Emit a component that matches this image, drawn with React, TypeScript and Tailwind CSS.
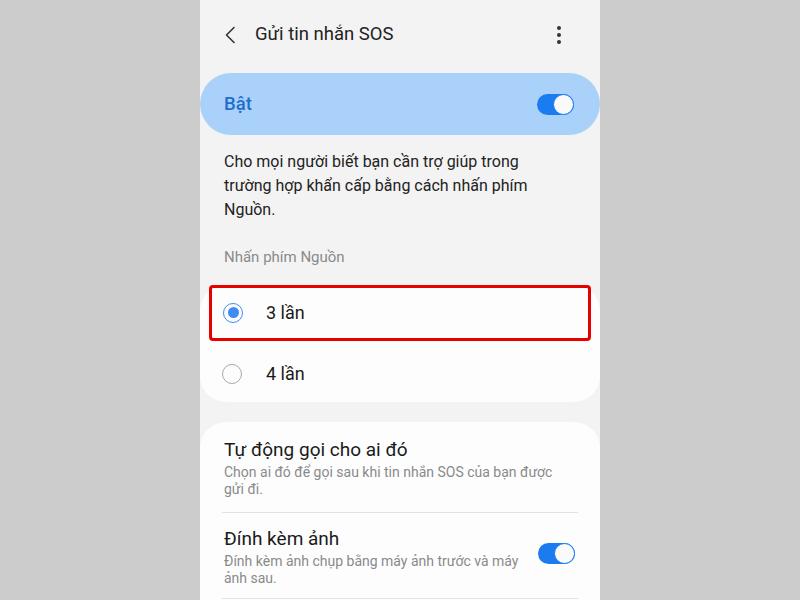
import React from "react";

function Toggle() {
  return (
    <div className="relative w-[37px] h-[21px] rounded-full bg-[#1b7cf0]">
      <div className="absolute right-0 top-0 w-[21px] h-[21px] rounded-full bg-[#fafafa] border-[1.5px] border-[#1b7cf0]" />
    </div>
  );
}

function Radio({ checked }: { checked: boolean }) {
  return checked ? (
    <div className="w-[20px] h-[20px] rounded-full border-[1.5px] border-[#3f8cf5] flex items-center justify-center">
      <div className="w-[11px] h-[11px] rounded-full bg-[#3f8cf5]" />
    </div>
  ) : (
    <div className="w-[20px] h-[20px] rounded-full border-[1.5px] border-[#a8a8a8]" />
  );
}

export default function App() {
  return (
    <div
      className="w-[800px] h-[600px] bg-[#cccccc] flex justify-center overflow-hidden"
      style={{ fontFamily: "Roboto, 'Noto Sans', sans-serif" }}
    >
      <div className="w-[400px] h-full bg-[#f3f3f3] flex flex-col">
        {/* header */}
        <div className="h-[69px] flex items-center pl-[24px] pr-[39px]">
          <svg width="12" height="18" viewBox="0 0 12 18" fill="none" className="mr-[19px]">
            <path d="M10 1.5 L2.5 9 L10 16.5" stroke="#333" strokeWidth="1.6" strokeLinecap="round" strokeLinejoin="round" />
          </svg>
          <span className="text-[18.5px] text-[#222]">Gửi tin nhắn SOS</span>
          <div className="ml-auto flex flex-col gap-[3px]">
            <div className="w-[4px] h-[4px] rounded-full bg-[#333]" />
            <div className="w-[4px] h-[4px] rounded-full bg-[#333]" />
            <div className="w-[4px] h-[4px] rounded-full bg-[#333]" />
          </div>
        </div>

        {/* master switch */}
        <div className="mt-[4px] h-[62px] rounded-[31px] bg-[#aad1fa] flex items-center pl-[24px] pr-[26px]">
          <span className="pt-[2px] text-[18.5px] font-medium text-[#1d6fce]">Bật</span>
          <div className="ml-auto">
            <Toggle />
          </div>
        </div>

        <p className="mt-[15px] pl-[24px] pr-[60px] text-[16px] leading-[24px] text-[#222]">
          Cho mọi người biết bạn cần trợ giúp trong trường hợp khẩn cấp bằng cách nhấn phím Nguồn.
        </p>

        <p className="mt-[24px] px-[24px] text-[15px] text-[#8a8a8a]">Nhấn phím Nguồn</p>

        {/* option card */}
        <div className="mt-[16px] bg-[#fdfdfd] rounded-[26px] flex flex-col">
          <div className="mx-[9px] h-[56px] border-[3px] border-[#e60000] rounded-[4px] flex items-center pl-[11px]">
            <Radio checked />
            <span className="ml-[23px] text-[18px] text-[#1a1a1a]">3 lần</span>
          </div>
          <div className="h-[61px] pt-[5px] flex items-center pl-[22px]">
            <Radio checked={false} />
            <span className="ml-[24px] text-[18px] text-[#1a1a1a]">4 lần</span>
          </div>
        </div>

        {/* other settings */}
        <div className="mt-[20px] bg-[#fdfdfd] rounded-t-[26px] flex-1 px-[22px] pt-[14px]">
          <div className="px-[2px] pb-[14px] border-b border-[#e2e2e2]">
            <div className="text-[19px] leading-[28px] text-[#1a1a1a]">Tự động gọi cho ai đó</div>
            <div className="text-[14px] leading-[17px] text-[#8a8a8a] pr-[20px]">
              Chọn ai đó để gọi sau khi tin nhắn SOS của bạn được gửi đi.
            </div>
          </div>
          <div className="px-[2px] pt-[12px] pb-[11px] border-b border-[#e2e2e2] flex items-center">
            <div className="flex-1 pr-[16px]">
              <div className="text-[19px] leading-[28px] text-[#1a1a1a]">Đính kèm ảnh</div>
              <div className="text-[14px] leading-[17px] text-[#8a8a8a]">
                Đính kèm ảnh chụp bằng máy ảnh trước và máy ảnh sau.
              </div>
            </div>
            <div className="-mt-[4px] mr-[1px]">
              <Toggle />
            </div>
          </div>
        </div>
      </div>
    </div>
  );
}
